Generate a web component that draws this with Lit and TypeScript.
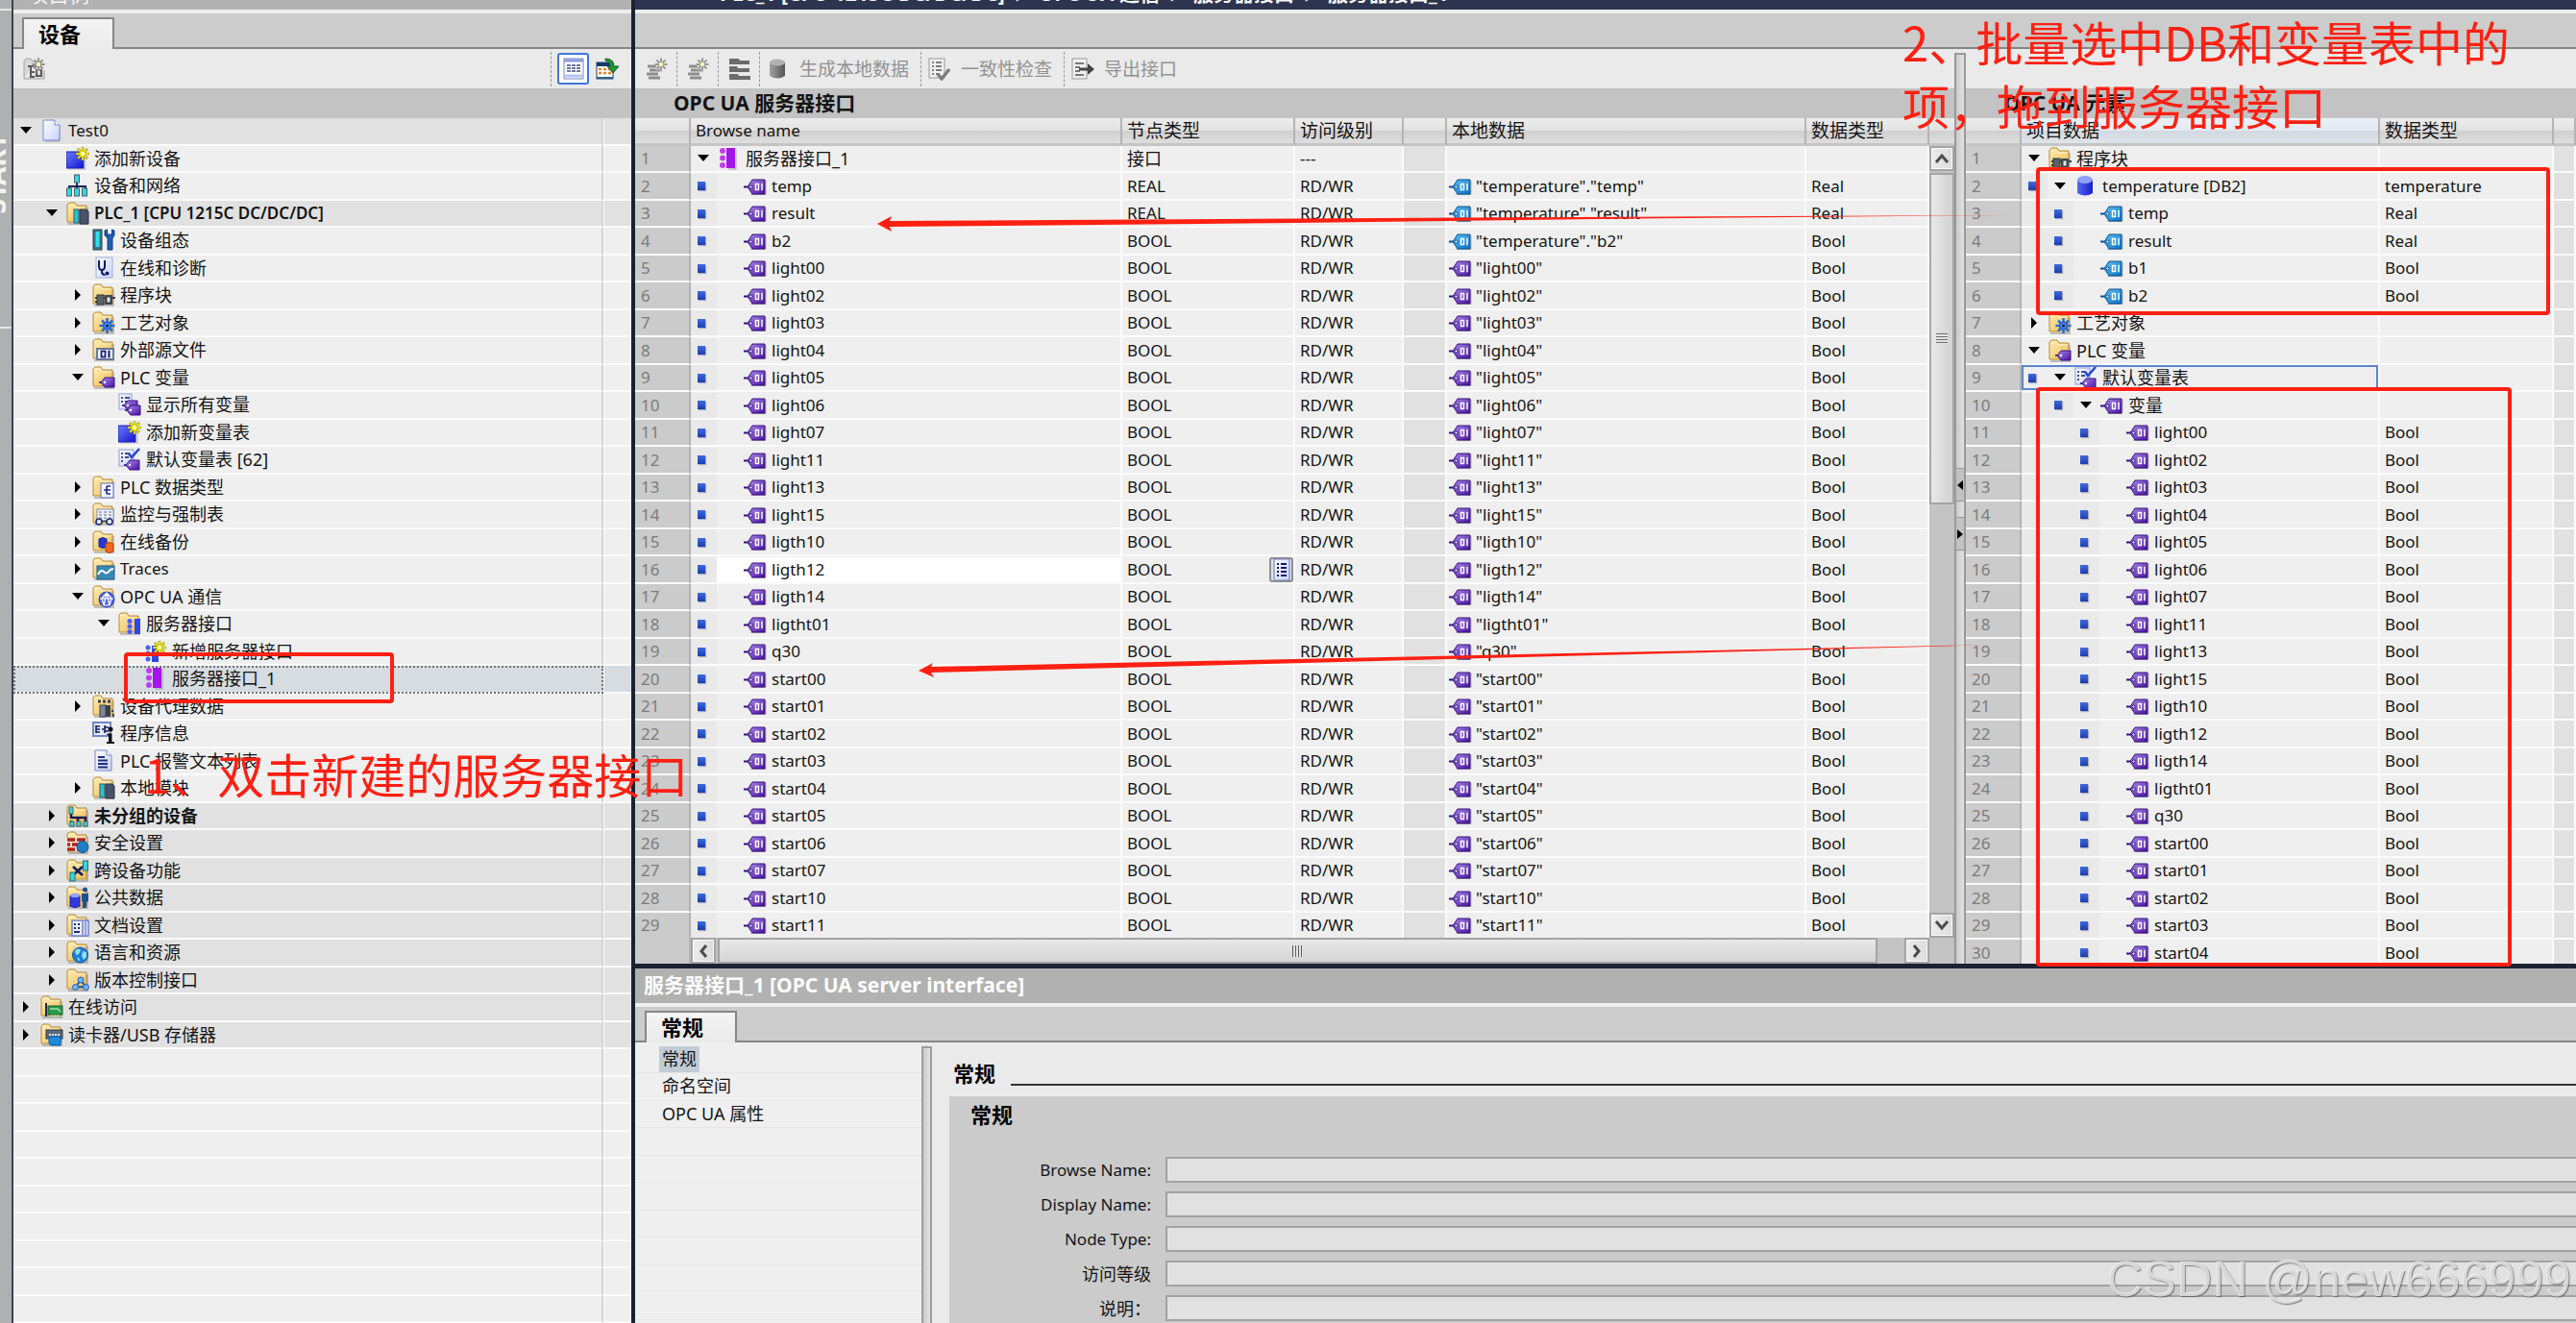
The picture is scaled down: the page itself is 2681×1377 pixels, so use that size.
import { LitElement, html, svg, css, nothing, TemplateResult } from "lit";
import { customElement } from "lit/decorators.js";
import { classMap } from "lit/directives/class-map.js";
import { styleMap } from "lit/directives/style-map.js";

type Row = {
  level: number;
  icon: string;
  text: string;
  open?: boolean;
  closed?: boolean;
  shade?: boolean;
  bold?: boolean;
  selected?: boolean;
};

const PROJECT_TREE: Row[] = [
  { level: 0, icon: "doc", text: "Test0", open: true, shade: true },
  { level: 1, icon: "add", text: "添加新设备" },
  { level: 1, icon: "net", text: "设备和网络" },
  { level: 1, icon: "fplc", text: "PLC_1 [CPU 1215C DC/DC/DC]", open: true, shade: true, bold: true },
  { level: 2, icon: "config", text: "设备组态" },
  { level: 2, icon: "diag", text: "在线和诊断" },
  { level: 2, icon: "fblock", text: "程序块", closed: true },
  { level: 2, icon: "ftech", text: "工艺对象", closed: true },
  { level: 2, icon: "fsource", text: "外部源文件", closed: true },
  { level: 2, icon: "ftag", text: "PLC 变量", open: true },
  { level: 3, icon: "alltags", text: "显示所有变量" },
  { level: 3, icon: "add", text: "添加新变量表" },
  { level: 3, icon: "deftags", text: "默认变量表 [62]" },
  { level: 2, icon: "ftype", text: "PLC 数据类型", closed: true },
  { level: 2, icon: "fwatch", text: "监控与强制表", closed: true },
  { level: 2, icon: "fbackup", text: "在线备份", closed: true },
  { level: 2, icon: "ftrace", text: "Traces", closed: true },
  { level: 2, icon: "fopc", text: "OPC UA 通信", open: true },
  { level: 3, icon: "fserver", text: "服务器接口", open: true },
  { level: 4, icon: "newserver", text: "新增服务器接口" },
  { level: 4, icon: "server", text: "服务器接口_1", selected: true },
  { level: 2, icon: "fproxy", text: "设备代理数据", closed: true },
  { level: 2, icon: "info", text: "程序信息" },
  { level: 2, icon: "textlist", text: "PLC 报警文本列表" },
  { level: 2, icon: "fplc", text: "本地模块", closed: true },
  { level: 1, icon: "fungrouped", text: "未分组的设备", closed: true, shade: true, bold: true },
  { level: 1, icon: "fsecurity", text: "安全设置", closed: true, shade: true },
  { level: 1, icon: "fcross", text: "跨设备功能", closed: true, shade: true },
  { level: 1, icon: "fcommon", text: "公共数据", closed: true, shade: true },
  { level: 1, icon: "fdocs", text: "文档设置", closed: true, shade: true },
  { level: 1, icon: "flang", text: "语言和资源", closed: true, shade: true },
  { level: 1, icon: "fversion", text: "版本控制接口", closed: true, shade: true },
  { level: 0, icon: "fonline", text: "在线访问", closed: true, shade: true },
  { level: 0, icon: "fcard", text: "读卡器/USB 存储器", closed: true, shade: true },
];

const TAGS = [
  "light00", "light02", "light03", "light04", "light05", "light06", "light07",
  "light11", "light13", "light15", "ligth10", "ligth12", "ligth14", "ligtht01",
  "q30", "start00", "start01", "start02", "start03", "start04", "start05",
  "start06", "start07", "start10", "start11",
];

const ELEMENTS: (Row & { type: string; focus?: boolean })[] = [
  { level: 0, icon: "fblock", text: "程序块", open: true, type: "" },
  { level: 1, icon: "db", text: "temperature [DB2]", open: true, type: "temperature" },
  { level: 2, icon: "tagblue", text: "temp", type: "Real" },
  { level: 2, icon: "tagblue", text: "result", type: "Real" },
  { level: 2, icon: "tagblue", text: "b1", type: "Bool" },
  { level: 2, icon: "tagblue", text: "b2", type: "Bool" },
  { level: 0, icon: "ftech", text: "工艺对象", closed: true, type: "" },
  { level: 0, icon: "ftag", text: "PLC 变量", open: true, type: "" },
  { level: 1, icon: "deftags", text: "默认变量表", open: true, type: "", focus: true },
  { level: 2, icon: "tag", text: "变量", open: true, type: "" },
  ...TAGS.slice(0, 20).map((t) => ({ level: 3, icon: "tag", text: t, type: "Bool" })),
];

const NODES = [
  { name: "temp", node: "REAL", local: '"temperature"."temp"', type: "Real" },
  { name: "result", node: "REAL", local: '"temperature"."result"', type: "Real" },
  { name: "b2", node: "BOOL", local: '"temperature"."b2"', type: "Bool" },
  ...TAGS.map((t) => ({ name: t, node: "BOOL", local: `"${t}"`, type: "Bool" })),
];

const folder = svg`
  <path d="M2 23h20V6" fill="none" stroke="#000" stroke-opacity=".2" stroke-width="2"/>
  <path d="M1 21V3l2-2h6l2 3h10v17z" fill="url(#gFolder)" stroke="#b98a34"/>
  <path d="M2 5l2-2h4l2 3h10" fill="none" stroke="#fff3cc"/>`;

const star = (x: number, y: number, c = "#f4f000", edge = "#9a9410") => svg`
  <g transform="translate(${x} ${y})">
    <path d="M0-7V7M-7 0H7M-5-5L5 5M5-5L-5 5" stroke=${edge} stroke-width="2.6"/>
    <path d="M0-6.500V6.500M-6.500 0H6.500M-4.500-4.500L4.500 4.500M4.500-4.500L-4.500 4.500" stroke=${c} stroke-width="1.5"/>
    <circle r="2.200" fill="#fffcb0"/>
  </g>`;

const tagShape = (fill: string, edge: string) => svg`
  <path d="M7 20.500h16V6" fill="none" stroke="#000" stroke-opacity=".25"/>
  <path d="M0 12.500h5" stroke=${edge} stroke-width="2"/>
  <path d="M4 12.500L9 5h13v15H9z" fill=${fill} stroke=${edge} stroke-width="1"/>
  <circle cx="7.500" cy="12.500" r="1.500" fill="#fff" stroke=${edge}/>
  <rect x="12.500" y="9.500" width="3" height="6" fill="none" stroke="#fff" stroke-width="1.500"/>
  <path d="M19 8.700v7.600" stroke="#fff" stroke-width="1.500"/>`;

const miniTag = (x: number, y: number) => svg`
  <g transform="translate(${x} ${y})">
    <path d="M-2 5h3" stroke="#1d0a5c" stroke-width="1.500"/>
    <path d="M0 5L4 0h10v10H4z" fill="url(#gTag)" stroke="#3b0f8c"/>
    <circle cx="4" cy="5" r="1.200" fill="#fff"/>
  </g>`;

const sheet = svg`
  <path d="M3 1h12l5 5v16H3z" fill="url(#gSheet)" stroke="#7a86d8"/>
  <path d="M15 1v5h5" fill="#fff" stroke="#7a86d8"/>`;

const ICONS: Record<string, TemplateResult<2>> = {
  doc: svg`<path d="M5 23h15V8" fill="none" stroke="#000" stroke-opacity=".25"/>${sheet}`,
  add: svg`<path d="M2 23h18V7" fill="none" stroke="#000" stroke-opacity=".2"/><rect x="0" y="5" width="18" height="17" fill="url(#gBlue)" stroke="#1a1fc0"/>${star(17, 7)}`,
  net: svg`
    <path d="M11 8v5M3 17v-4h17v4M11 13v4" fill="none" stroke="#1d2358" stroke-width="2"/>
    <g fill="#35d6e2" stroke="#47636b"><rect x="8.500" y="1" width="5" height="8"/><rect x=".5" y="15" width="5" height="8"/><rect x="8.500" y="15" width="5" height="8"/><rect x="16.500" y="15" width="5" height="8"/></g>`,
  fplc: svg`${folder}<rect x="8" y="8" width="5" height="14" fill="#25c3d4" stroke="#35555f"/><path d="M14 8h7l2 2v13h-9z" fill="#4a5468" stroke="#2b3243"/>`,
  config: svg`<rect x="1" y="1" width="9" height="21" fill="#3f7180" stroke="#274751"/><rect x="3.500" y="3" width="4" height="16" fill="#29e2ee"/>
    <path d="M13 2v5l3 3v12h5V10l2-3V2l-2.500-1v5h-5V1z" fill="#2160b4" stroke="#123f80"/>`,
  diag: svg`<rect x="4" y="1" width="17" height="21" fill="url(#gSheet)" stroke="#a2aede"/><path d="M8 5H7v5q0 4 3 4t3-4V5h-1M10 14v2q0 3 3.500 3" fill="none" stroke="#10176e" stroke-width="2"/><circle cx="15.500" cy="17.500" r="2" fill="#10176e"/>`,
  fblock: svg`${folder}<path d="M3 15h21M3 19h5" stroke="#3a3f4a" stroke-width="2"/><rect x="5" y="12" width="7" height="10" fill="#5a6270" stroke="#2e333d"/><rect x="13" y="12" width="8" height="10" fill="#3f4652"/><rect x="15.500" y="14.500" width="3" height="5" fill="#dfe6ee"/>`,
  ftech: svg`${folder}<g transform="translate(15.500 15)"><path d="M0-8V8M-8 0H8M-5.500-5.500L5.500 5.500M5.500-5.500L-5.500 5.500" stroke="#2c6fd8" stroke-width="2.600"/><circle r="4" fill="#3f86e8" stroke="#1d4fae"/><circle r="1.500" fill="#0e2050"/></g>`,
  fsource: svg`${folder}<rect x="5" y="11" width="17" height="11" fill="#eef2fb" stroke="#6a7894" stroke-width="2"/><rect x="9.500" y="13.500" width="4" height="6" fill="none" stroke="#10176e" stroke-width="1.700"/><path d="M17.500 12.700v7.600" stroke="#10176e" stroke-width="2"/>`,
  ftag: svg`${folder}${miniTag(9, 12)}`,
  alltags: svg`<rect x="1" y="1" width="13" height="16" fill="url(#gSheet)" stroke="#8e9ae0"/><path d="M3 5h2M7 5h5M3 9h2M7 9h3" stroke="#10176e" stroke-width="1.600"/>${miniTag(6, 8)}${miniTag(9, 13)}`,
  deftags: svg`<rect x="1" y="2" width="15" height="17" fill="url(#gSheet)" stroke="#8e9ae0"/><path d="M3 6h2M7 6h5M3 10h2M7 10h4M3 14h2" stroke="#10176e" stroke-width="1.600"/><path d="M11 6l3 4 8-9" fill="none" stroke="#2548d0" stroke-width="2.600"/>${miniTag(8, 13)}`,
  ftype: svg`${folder}<rect x="9" y="8" width="13" height="15" fill="#f2f5ff" stroke="#6070c0"/><path d="M12 15h3M15 11v8M15 11h4M15 15h4M15 19h4" stroke="#1c2a90" stroke-width="1.600" fill="none"/>`,
  fwatch: svg`${folder}<rect x="5" y="7" width="17" height="12" fill="#f2f5ff" stroke="#7f8cb0"/><path d="M7 10h13M7 13h13M7 16h13" stroke="#56639a" stroke-dasharray="3 2"/><path d="M10 20q3-2 5 0" fill="none" stroke="#123"/><circle cx="7" cy="20" r="3" fill="#dfe8ff" stroke="#243070" stroke-width="1.600"/><circle cx="18" cy="20" r="3" fill="#dfe8ff" stroke="#243070" stroke-width="1.600"/>`,
  fbackup: svg`${folder}<path d="M7 9v8q4 3 8 0V9q-4-3-8 0z" fill="#2338d8" stroke="#1a2494"/><path d="M14 14v8q4 3 8 0v-8q-4-3-8 0z" fill="#f26a20" stroke="#b8430c"/>`,
  ftrace: svg`${folder}<rect x="5" y="9" width="18" height="14" fill="#3689b8" stroke="#1f5d84"/><path d="M6 18q3-6 6-3t5 0 5-3" fill="none" stroke="#fff" stroke-width="2"/>`,
  fopc: svg`${folder}<circle cx="15" cy="15" r="8" fill="#5468e0" stroke="#2d3fa8"/><path d="M15 8l-5 6 2 7h6l2-7zM8 14h14M12 21l3-13 3 13" fill="none" stroke="#fff" stroke-width="1.200"/>`,
  fserver: svg`${folder}<rect x="17" y="7" width="6" height="16" fill="#3048e0"/><circle cx="12" cy="9.500" r="2.500" fill="#4a60f0"/><circle cx="12" cy="15" r="2.500" fill="#4a60f0"/><circle cx="12" cy="20.500" r="2.500" fill="#4a60f0"/>`,
  newserver: svg`<rect x="8" y="6" width="7" height="17" fill="#3048e0"/><circle cx="4" cy="8" r="2.500" fill="#4a60f0"/><circle cx="4" cy="14" r="2.500" fill="#4a60f0"/><circle cx="4" cy="20" r="2.500" fill="#4a60f0"/>${star(16, 8)}`,
  server: svg`<path d="M19 2v21h-8" fill="none" stroke="#000" stroke-opacity=".3"/><rect x="9" y="1" width="9" height="21" fill="#a514ea"/><circle cx="5" cy="4" r="3" fill="#c23cf4"/><circle cx="5" cy="11.500" r="3" fill="#c23cf4"/><circle cx="5" cy="19" r="3" fill="#c23cf4"/>`,
  fproxy: svg`${folder}<path d="M6 7h14" stroke="#39404e" stroke-width="3" stroke-dasharray="3 2"/><rect x="8" y="11" width="6" height="12" fill="#7c8697" stroke="#39404e"/><rect x="14" y="11" width="5" height="12" fill="#39404e"/><rect x="20" y="16" width="2" height="2" fill="#39404e"/><rect x="21" y="20" width="2" height="3" fill="#39404e"/>`,
  info: svg`<rect x="1" y="1" width="18" height="14" fill="#e6ecff" stroke="#7487c8" stroke-width="2"/><path d="M4 4v8M4 5h4M4 8h4M4 11h4M10 8h3M13 4v8M13 6h4M13 10h4" stroke="#10206a" stroke-width="1.600"/><circle cx="19" cy="8" r="2.500" fill="#101010"/><path d="M15.500 12.500h5V21H23v2h-8v-2h2v-6.500h-1.500z" fill="#101010"/>`,
  textlist: svg`${sheet}<path d="M6 8h7M6 11.500h10M6 15h10M6 18.500h10" stroke="#1c2a80" stroke-width="1.800"/>`,
  fungrouped: svg`${folder}<path d="M5 9v6M5 14h15v5M5 17v2M12 14v5" fill="none" stroke="#141a58" stroke-width="2.600"/><g fill="#35d6e2" stroke="#47636b"><rect x="3" y="3" width="4" height="7"/><rect x="4" y="18" width="4" height="5"/><rect x="11" y="18" width="4" height="5"/><rect x="18" y="18" width="4" height="5"/></g>`,
  fsecurity: svg`${folder}<rect x="0" y="7" width="21" height="14" fill="#f4e4dc"/><path d="M1 9h8M11 9h9M1 14h3M6 14h8M16 14h5M1 19h8M11 19h5" stroke="#b02418" stroke-width="3.600"/><circle cx="17" cy="16.500" r="6" fill="#1d7fc4" stroke="#105688"/>`,
  fcross: svg`${folder}<path d="M7 8l10 9M17 8L7 17" stroke="#101c60" stroke-width="2.600"/><g fill="#35d6e2" stroke="#2e6d78"><rect x="17.500" y="2" width="5" height="10"/><rect x="4" y="14" width="5" height="9"/></g>`,
  fcommon: svg`${folder}<path d="M4 10v11q5 3 10 0V10q-5-3-10 0z" fill="#2c3ae0" stroke="#1a2494"/><ellipse cx="9" cy="10" rx="5" ry="2" fill="#94a4f8"/><path d="M16 8h7v8l-2 1v6h-4v-6l-1-1z" fill="#1c5290"/><circle cx="19.500" cy="4" r="2.500" fill="#1c5290"/>`,
  fdocs: svg`${folder}<rect x="6" y="7" width="17" height="16" fill="#e9edff" stroke="#7482cc" stroke-width="1.500"/><path d="M8 11h2M8 15h2M8 19h6M12 11h2M12 15h2" stroke="#1c2a80" stroke-width="1.800"/><path d="M17 8v14M20 8v14" stroke="#7482cc" stroke-width="1.500"/>`,
  flang: svg`${folder}<circle cx="14.500" cy="15" r="8" fill="#1f7fd8" stroke="#1257a0"/><path d="M9 10q4-3 6 0l-2 4-3 1zM17 11l4 1v5l-3 3-2-4zM11 17l3 2-1 3z" fill="#8fe0f0"/>`,
  fversion: svg`${folder}<path d="M15 12l-5 7h10z" fill="none" stroke="#1f5fb8" stroke-width="2"/><g fill="#6db8f8" stroke="#1f5fb8"><circle cx="15" cy="12" r="3"/><circle cx="9.500" cy="19.500" r="3"/><circle cx="20.500" cy="19.500" r="3"/></g>`,
  fonline: svg`${folder}<path d="M6 8v14" stroke="#20265c" stroke-width="2"/><rect x="8" y="11" width="15" height="9" fill="#2b9a50" stroke="#14602c"/><path d="M10 14h8l3 3M12 20v3M15 20v3M18 20v3" stroke="#9fe0a8" stroke-width="1.500" fill="none"/>`,
  fcard: svg`${folder}<rect x="6" y="7" width="17" height="9" fill="#5c6878" stroke="#2e3744"/><path d="M9 12h11" stroke="#dfe6ee" stroke-width="2" stroke-dasharray="2 1"/><path d="M9 14h12v9H11l-2-2z" fill="#1d8be0" stroke="#0d5ea4"/>`,
  tag: tagShape("url(#gTag)", "#35107c"),
  tagblue: tagShape("url(#gCyan)", "#0b4d8c"),
  db: svg`<path d="M3 5v14q8 5 16 0V5z" fill="url(#gDb)"/><ellipse cx="11" cy="5" rx="8" ry="4" fill="#8fa0fa"/>`,
  gnew: svg`<path d="M1 22V4l2-3h5l2 3h3M1 22h21V13" fill="#d8d8d8" stroke="#a2a2a2"/><path d="M5 9h8M8 10v10h4M8 15h4M14 13h5v6h-5z" fill="none" stroke="#5a5a5a" stroke-width="2"/>${star(16, 7, "#777777", "#d8d8d8")}`,
  gstack: svg`<path d="M2 9h9M4 13h13M1 17h12M3 21h12" stroke="#8d8d8d" stroke-width="3"/>${star(16, 7, "#808080", "#e4e4e4")}`,
  gtree: svg`<path d="M1 1h10l1 2h10v4H1zM1 9h8l1 2h12v4H1zM1 17h9l1 2h12v4H1z" fill="#6c6c6c"/>`,
  gdb: svg`<path d="M3 5v14q8 5 16 0V5z" fill="url(#gGrey)"/><ellipse cx="11" cy="5" rx="8" ry="3.500" fill="#b2b2b2"/>`,
  gcheck: svg`<rect x="1" y="1" width="16" height="20" fill="#f0f0f0" stroke="#9a9a9a"/><path d="M4 5h2M8 5h6M4 9h2M8 9h6M4 13h2M8 13h6M4 17h2M8 17h4" stroke="#555" stroke-width="1.600"/><path d="M10 17l4 5 8-10" fill="none" stroke="#7c7c7c" stroke-width="3.400"/>`,
  gexport: svg`<rect x="1" y="1" width="15" height="21" fill="#f0f0f0" stroke="#9a9a9a"/><path d="M4 6h9M4 10h5M4 14h5M4 18h9" stroke="#777" stroke-width="1.800"/><path d="M8 10.500h9V6l7 6-7 6v-4.500H8z" fill="#444"/>`,
  list: svg`<rect x="2" y="1" width="20" height="21" fill="#fff" stroke="#7a86b8"/><path d="M2 3h20" stroke="#8a9ae0" stroke-width="3"/><path d="M5 8h14M5 11h14M5 14h14" stroke="#3c4880" stroke-width="1.600" stroke-dasharray="4 1"/><path d="M2 19h20" stroke="#b4c0f0" stroke-width="3"/>`,
  sync: svg`<rect x="1" y="5" width="17" height="17" fill="#fff" stroke="#28406c"/><path d="M1 7h17" stroke="#123a70" stroke-width="4"/><path d="M3 12h13M3 16h13" stroke="#e08428" stroke-width="2.600" stroke-dasharray="3 2"/><path d="M1 21h17" stroke="#28608c" stroke-width="2"/><path d="M10 1q9 0 9 8h5l-6 7-6-7h3q0-5-5-6z" fill="#23923c" stroke="#13642a"/>`,
  lines: svg`<rect x="4" y="1" width="16" height="22" fill="url(#gSheet)" stroke="#5b74d8"/><path d="M7 6h2M11 6h6M7 10h2M11 10h6M7 14h2M11 14h6M7 18h2M11 18h6" stroke="#10176e" stroke-width="1.800"/>`,
};

const icon = (name: string) =>
  html`<svg class="icon" viewBox="0 0 24 24" width="24" height="24" aria-hidden="true">${ICONS[name]}</svg>`;

const chevron = (d: string) =>
  html`<svg viewBox="0 0 16 16" width="16" height="16" aria-hidden="true"><path d=${d} fill="none" stroke="#4c4c4c" stroke-width="3"/></svg>`;

const isLatin = (s: string) => !/[\u3000-\u9fff]/.test(s);

@customElement("app-root")
export class AppRoot extends LitElement {
  static styles = css`
    :host {
      display: block;
      position: relative;
      height: 100vh;
      overflow: hidden;
      font-family: "Noto Sans", "Noto Sans CJK SC", sans-serif;
      font-size: 18px;
      line-height: 26px;
      color: #141414;
      background: #eaeaea;
    }
    * { box-sizing: border-box; }
    button, input { font: inherit; color: inherit; margin: 0; padding: 0; border: 0; background: none; }
    .defs { position: absolute; width: 0; height: 0; }
    .icon { display: block; flex: none; }
    .latin { font-size: 17px; }
    .frame { display: flex; height: 100%; }

    .rail { flex: 0 0 14px; background: #b0b0b0; border-right: 2px solid #3c4252; display: flex; flex-direction: column; overflow: hidden; }
    .rail-top { height: 11px; border-bottom: 2px solid #e8e8e8; }
    .rail-tab { height: 331px; border-bottom: 2px solid #e8e8e8; display: flex; align-items: center; justify-content: flex-end; padding-right: 6px; padding-top: 10px; }
    .rail-text { writing-mode: vertical-rl; transform: rotate(180deg); font-size: 28px; font-weight: 700; line-height: 22px; color: #f4f4f4; }

    .titlebar { height: 10px; flex: none; overflow: hidden; display: flex; align-items: flex-end; justify-content: space-between; background: #b1b1b1; color: #f6f6f6; font-size: 22px; font-weight: 700; line-height: 30px; white-space: pre; }
    .titlebar > span { display: block; padding-bottom: 2px; }
    .titlebar.grey { padding: 0 8px 0 14px; font-weight: 400; }
    .titlebar.navy { background: #2d344f; padding-left: 88px; font-size: 21px; justify-content: flex-start; gap: 12px; }
    .strip { height: 41px; flex: none; background: #cccccc; border-top: 4px solid #efefef; border-bottom: 2px solid #868686; display: flex; align-items: flex-end; padding-left: 9px; }
    .tab { height: 33px; margin-bottom: -2px; min-width: 96px; padding: 0 15px 2px; text-align: left; background: linear-gradient(#f4f4f4, #eaeaea); border: 2px solid #868686; border-bottom: 0; font-size: 22px; font-weight: 700; color: #000; }
    .toolbar { height: 41px; flex: none; background: #eaeaea; display: flex; align-items: center; color: #929292; font-size: 19px; }
    .toolbar button { display: flex; align-items: center; height: 33px; gap: 10px; }
    .sep { width: 1px; height: 36px; border-left: 1px dashed #9a9a9a; }
    .band { height: 31px; flex: none; background: #c3c3c3; font-size: 21px; font-weight: 700; line-height: 30px; padding-left: 40px; white-space: nowrap; }

    .project { flex: 0 0 643px; display: flex; flex-direction: column; background: #efefef; min-width: 0; }
    .project .toolbar { padding: 0 13px 0 10px; }
    .spring { flex: 1; }
    .toolbar .on { width: 33px; margin: 0 7px 0 6px; justify-content: center; background: #fff; border: 2px solid #3f76dc; border-radius: 3px; }
    .tree { list-style: none; margin: 0; padding: 0; flex: 1; min-height: 0; overflow: hidden; }
    .node { display: flex; height: 28px; }
    .node:nth-child(odd) { height: 29px; }
    .node-main { flex: 1; border-bottom: 2px solid #fbfbfb; border-right: 2px solid #d4d4d4; }
    .node-side { flex: 0 0 29px; border-bottom: 2px solid #fbfbfb; border-left: 1px solid #fbfbfb; }
    .shade .node-main, .shade .node-side { background: #e1e1e1; }
    .selected .node-main { background: #d7dce0; outline: 2px dotted #747474; outline-offset: -2px; }
    .selected .node-side { background: #d7dce0; }
    .bold { font-weight: 600; }
    .label { display: flex; align-items: center; height: 26px; white-space: pre; }
    .slot { flex: 0 0 27px; height: 100%; display: flex; align-items: center; padding-left: 7px; }
    .slot.tint { background: #e9e9e9; }
    .slot.arrow { flex-basis: 28px; }
    .label .icon { margin-right: 5px; }
    .bullet { width: 8px; height: 9px; background: linear-gradient(#3f6ae0, #1c3cae); box-shadow: 1px 1px 1px #aab; }

    .vbar { flex: 0 0 4px; background: #1b2233; }
    .work { flex: 1; min-width: 0; display: grid; grid-template-rows: minmax(0, 1003fr) 5px minmax(0, 369fr); }
    .hbar { background: #1b2233; }
    .editor { display: flex; flex-direction: column; min-height: 0; }
    .panes { flex: 1; min-height: 0; display: grid; grid-template-columns: minmax(0, 1373fr) 12px minmax(0, 635fr); }
    .pane { display: flex; flex-direction: column; min-width: 0; min-height: 0; background: #efefef; }
    .pane .toolbar { padding-left: 1px; }
    .pane .toolbar button { padding: 0 8px 0 10px; }
    .pane .toolbar .wide { padding: 0 12px 0 7px; }
    .splitter { margin-top: 4px; background: linear-gradient(90deg, #cacaca, #e2e2e2); border: 2px solid #999; border-bottom: 0; display: flex; flex-direction: column; align-items: center; justify-content: center; gap: 16px; }
    .splitter button { width: 8px; height: 35px; background: #c2c2c2; border: 1px solid #999; border-width: 1px 0; display: flex; align-items: center; justify-content: center; }

    table { width: 100%; border-collapse: separate; border-spacing: 0; table-layout: fixed; }
    th { height: 29px; padding: 0 0 0 5px; text-align: left; font-weight: 400; font-size: 19px; line-height: 24px; background: linear-gradient(#ececec, #e2e2e2 50%, #d0d0d0 52%, #dedede); border-right: 2px solid #b4b4b4; border-bottom: 3px solid #c4c4c4; white-space: nowrap; }
    th.latin { font-size: 17px; }
    th.hot { background: linear-gradient(#eaf0f8, #e4eaf2 50%, #d3d9e0 52%, #dee4ea); }
    tbody tr { height: 28px; }
    tbody tr:nth-child(even) { height: 29px; }
    td { padding: 0 0 0 5px; background: #efefef; border-right: 2px solid #fbfbfb; border-bottom: 2px solid #fbfbfb; white-space: nowrap; overflow: hidden; }
    td.num { font-size: 17px; padding-left: 6px; color: #7c7c7c; background: #cbcbcb; border-right-color: #b2b2b2; }
    td.tree-cell { padding: 0; }
    td.void { background: #e1e1e1; }
    td.edit .label { background: #fff; }
    td.focus { box-shadow: inset 0 0 0 2px #5b85d6; }
    td.focus .tint { background: none; }
    .with-icon { display: flex; align-items: center; gap: 4px; margin-left: -3px; }
    .with-button { display: flex; justify-content: space-between; align-items: center; height: 26px; }
    .with-button button { width: 25px; height: 26px; display: flex; justify-content: center; align-items: center; border: 2px solid #8f8f8f; border-radius: 3px; background: #dfe3ea; overflow: hidden; }
    .clip { flex: 1; min-height: 0; overflow: hidden; }

    .grid-wrap { flex: 1; min-height: 0; display: grid; grid-template-columns: minmax(0, 1fr) 26px; grid-template-rows: minmax(0, 1fr) 27px; }
    .vscroll { background: #c3c3c3; display: flex; flex-direction: column; }
    .vscroll-head { height: 29px; background: linear-gradient(#ececec, #e2e2e2 50%, #d0d0d0 52%, #dedede); border-bottom: 3px solid #c4c4c4; }
    .sb { width: 26px; height: 26px; flex: none; display: flex; align-items: center; justify-content: center; border: 2px solid #a4a4a4; background: linear-gradient(90deg, #ececec, #dcdcdc); box-shadow: inset 0 0 0 1px #fafafa; }
    .vthumb { height: 345px; margin: 2px 0 auto; border: 2px solid #a4a4a4; background: linear-gradient(90deg, #e8e8e8, #d2d2d2); display: flex; align-items: center; justify-content: center; }
    .grip { width: 12px; height: 11px; background: repeating-linear-gradient(#6e6e6e 0 1px, #e4e4e4 1px 3px); }
    .hthumb .grip { width: 11px; height: 12px; background: repeating-linear-gradient(90deg, #5e5e5e 0 1px, #e4e4e4 1px 3px); }
    .hscroll { display: flex; background: #c3c3c3; }
    .hscroll .sb { height: 27px; }
    .hpad { flex: 0 0 58px; background: #cbcbcb; border-right: 2px solid #b2b2b2; }
    .hthumb { flex: 1; margin: 0 28px 0 2px; border: 2px solid #a4a4a4; background: linear-gradient(#e8e8e8, #d4d4d4); display: flex; align-items: center; justify-content: center; }
    .corner { background: #c3c3c3; }

    .inspector { display: flex; flex-direction: column; min-height: 0; background: #eaeaea; }
    .caption { height: 36px; flex: none; padding-left: 9px; background: #b1b1b1; color: #fdfdfd; font-size: 21px; font-weight: 700; line-height: 34px; }
    .inspector .strip { padding-left: 10px; }
    .props { flex: 1; min-height: 0; display: flex; }
    .nav { flex: 0 0 298px; list-style: none; margin: 0; padding: 4px 0 0; background: #efefef; overflow: hidden; }
    .nav li { height: 28px; border-bottom: 1px solid #e6e6e6; padding-left: 25px; line-height: 26px; }
    .nav li:nth-child(even) { height: 29px; }
    .nav a { display: inline-block; height: 27px; padding: 0 3px; color: inherit; text-decoration: none; }
    .nav a.current { background: #c2ccd6; }
    .nav-split { flex: 0 0 11px; margin-top: 4px; background: linear-gradient(90deg, #cacaca, #e2e2e2); border: 2px solid #9c9c9c; border-bottom: 0; }
    .form { flex: 1; min-width: 0; padding: 17px 0 0 18px; display: flex; flex-direction: column; }
    h2, h3 { margin: 0; font-size: 22px; font-weight: 700; line-height: 30px; color: #000; }
    h2 { display: flex; gap: 16px; padding-left: 4px; }
    h2::after { content: ""; flex: 1; height: 26px; border-bottom: 2px solid #333; }
    .group { flex: 1; min-height: 0; margin-top: 9px; background: #cbcbcb; padding: 4px 0 0 22px; overflow: hidden; }
    .field { display: grid; grid-template-columns: 188px 1fr; column-gap: 15px; align-items: center; height: 27px; margin-bottom: 9px; }
    h3 { margin-bottom: 29px; }
    .field label { text-align: right; white-space: nowrap; }
    .field input { width: 100%; height: 27px; border: 2px solid #a2a2a2; border-right: 0; background: #e1e1e1; }

    .overlay { position: absolute; left: 0; top: 0; width: 100%; height: 100%; pointer-events: none; }
    .note { position: absolute; margin: 0; color: #ff2012; font-family: "Noto Sans CJK SC", sans-serif; font-weight: 400; font-size: 49px; line-height: 66px; white-space: pre; pointer-events: none; }
    .note-one { left: 150px; top: 772px; }
    .note-two { left: 1980px; top: 10px; }
    .watermark { position: absolute; right: 5px; bottom: 18px; font-family: "Liberation Sans", sans-serif; font-size: 52px; line-height: 56px; color: rgba(244, 244, 244, 0.75); text-shadow: 1px 1px 1px rgba(60, 60, 60, 0.6); pointer-events: none; }
  `;

  private label(r: Row, tint = false) {
    const slots = [];
    for (let i = 0; i < r.level; i++) {
      slots.push(html`<span class=${classMap({ slot: true, tint })}>${tint && i === r.level - 1 ? html`<span class="bullet"></span>` : nothing}</span>`);
    }
    const arrow = r.open
      ? html`<svg width="12" height="12" viewBox="0 0 12 12"><path d="M0 2h12L6 9z" fill="#000"/></svg>`
      : r.closed
        ? html`<svg width="12" height="12" viewBox="0 0 12 12"><path d="M3 0l6 6-6 6z" fill="#000"/></svg>`
        : nothing;
    return html`<div class=${classMap({ label: true, latin: isLatin(r.text), bold: !!r.bold })}>${slots}<span class="slot arrow">${arrow}</span>${icon(r.icon)}<span>${r.text}</span></div>`;
  }

  private projectPane() {
    return html`
      <aside class="project">
        <div class="titlebar grey"><span>项目树</span></div>
        <div class="strip" role="tablist"><button class="tab" role="tab" aria-selected="true">设备</button></div>
        <div class="toolbar">
          <button aria-label="New">${icon("gnew")}</button>
          <span class="spring"></span><span class="sep"></span>
          <button class="on" aria-label="List">${icon("list")}</button>
          <button aria-label="Sync">${icon("sync")}</button>
        </div>
        <div class="band"></div>
        <ul class="tree" role="tree">
          ${PROJECT_TREE.map((r) => html`
            <li role="treeitem" class=${classMap({ node: true, shade: !!r.shade, selected: !!r.selected })}>
              <div class="node-main">${this.label(r)}</div><div class="node-side"></div>
            </li>`)}
          ${Array.from({ length: 11 }, () => html`<li class="node" role="presentation"><div class="node-main"></div><div class="node-side"></div></li>`)}
        </ul>
      </aside>`;
  }

  private cols(widths: number[]) {
    return html`<colgroup>${widths.map((w) => html`<col style=${styleMap(w ? { width: `${w}px` } : {})}>`)}</colgroup>`;
  }

  private interfaceTable() {
    return html`
      <table>
        ${this.cols([58, 449, 180, 113, 45, 0, 128])}
        <thead><tr><th></th><th class="latin">Browse name</th><th>节点类型</th><th>访问级别</th><th></th><th>本地数据</th><th>数据类型</th></tr></thead>
        <tbody>
          <tr>
            <td class="num">1</td>
            <td class="tree-cell">${this.label({ level: 0, icon: "server", text: "服务器接口_1", open: true })}</td>
            <td>接口</td><td class="latin">---</td><td class="void"></td><td></td><td></td>
          </tr>
          ${NODES.map((n, i) => {
            const edit = n.name === "ligth12";
            return html`
              <tr>
                <td class="num">${i + 2}</td>
                <td class=${classMap({ "tree-cell": true, edit })}>${this.label({ level: 1, icon: "tag", text: n.name }, true)}</td>
                <td class="latin">${edit
                  ? html`<div class="with-button"><span>${n.node}</span><button aria-label="Select type">${icon("lines")}</button></div>`
                  : n.node}</td>
                <td class="latin">RD/WR</td>
                <td class="void"></td>
                <td class="latin"><div class="with-icon">${icon(i < 3 ? "tagblue" : "tag")}<span>${n.local}</span></div></td>
                <td class="latin">${n.type}</td>
              </tr>`;
          })}
        </tbody>
      </table>`;
  }

  private elementTable() {
    return html`
      <table>
        ${this.cols([58, 0, 181, 23])}
        <thead><tr><th></th><th class="hot">项目数据</th><th>数据类型</th><th></th></tr></thead>
        <tbody>
          ${ELEMENTS.map((r, i) => html`
            <tr>
              <td class="num">${i + 1}</td>
              <td class=${classMap({ "tree-cell": true, focus: !!r.focus })}>${this.label(r, true)}</td>
              <td class="latin">${r.type}</td>
              <td class="void"></td>
            </tr>`)}
        </tbody>
      </table>`;
  }

  private editor() {
    return html`
      <section class="editor">
        <div class="titlebar navy">
          <span>PLC_1 [CPU 1215C DC/DC/DC]</span><span>▸</span><span>OPC UA 通信</span><span>▸</span><span>服务器接口</span><span>▸</span><span>服务器接口_1</span>
        </div>
        <div class="strip"></div>
        <div class="panes">
          <div class="pane">
            <div class="toolbar">
              <button aria-label="Insert">${icon("gstack")}</button><span class="sep"></span>
              <button aria-label="Add">${icon("gstack")}</button><span class="sep"></span>
              <button aria-label="Expand">${icon("gtree")}</button><span class="sep"></span>
              <button class="wide">${icon("gdb")}生成本地数据</button><span class="sep"></span>
              <button class="wide">${icon("gcheck")}一致性检查</button><span class="sep"></span>
              <button class="wide">${icon("gexport")}导出接口</button>
            </div>
            <div class="band">OPC UA 服务器接口</div>
            <div class="grid-wrap">
              <div class="clip">${this.interfaceTable()}</div>
              <div class="vscroll">
                <div class="vscroll-head"></div>
                <button class="sb" aria-label="Up">${chevron("M2 12l6-7 6 7")}</button>
                <div class="vthumb"><span class="grip"></span></div>
                <button class="sb" aria-label="Down">${chevron("M2 4l6 7 6-7")}</button>
              </div>
              <div class="hscroll">
                <span class="hpad"></span>
                <button class="sb" aria-label="Left">${chevron("M11 2L6 8l5 6")}</button>
                <div class="hthumb"><span class="grip"></span></div>
                <button class="sb" aria-label="Right">${chevron("M5 2l5 6-5 6")}</button>
              </div>
              <div class="corner"></div>
            </div>
          </div>
          <div class="splitter">
            <button aria-label="Collapse right"><svg width="6" height="10"><path d="M6 0v10L0 5z" fill="#000"/></svg></button>
            <button aria-label="Collapse left"><svg width="6" height="10"><path d="M0 0v10l6-5z" fill="#000"/></svg></button>
          </div>
          <div class="pane">
            <div class="toolbar"></div>
            <div class="band">OPC UA 元素</div>
            <div class="clip">${this.elementTable()}</div>
          </div>
        </div>
      </section>`;
  }

  private inspector() {
    const nav = ["常规", "命名空间", "OPC UA 属性"];
    const fields = ["Browse Name:", "Display Name:", "Node Type:", "访问等级", "说明："];
    return html`
      <section class="inspector">
        <div class="caption">服务器接口_1 [OPC UA server interface]</div>
        <div class="strip" role="tablist"><button class="tab" role="tab" aria-selected="true">常规</button></div>
        <div class="props">
          <ul class="nav">
            ${nav.map((n, i) => html`<li><a href="#" class=${classMap({ current: i === 0 })}>${n}</a></li>`)}
            ${Array.from({ length: 8 }, () => html`<li></li>`)}
          </ul>
          <div class="nav-split"></div>
          <div class="form">
            <h2>常规</h2>
            <div class="group">
              <h3>常规</h3>
              ${fields.map((f, i) => html`
                <div class="field">
                  <label for="f${i}" class=${classMap({ latin: isLatin(f) })}>${f}</label>
                  <input id="f${i}" type="text" readonly>
                </div>`)}
            </div>
          </div>
        </div>
      </section>`;
  }

  private gradients() {
    const g = (id: string, a: string, b: string, x2 = "1", y2 = "1") =>
      svg`<linearGradient id=${id} x1="0" y1="0" x2=${x2} y2=${y2}><stop offset="0" stop-color=${a}/><stop offset="1" stop-color=${b}/></linearGradient>`;
    return html`<svg class="defs" aria-hidden="true"><defs>
      ${g("gFolder", "#ffeeb4", "#edbb55")}
      ${g("gBlue", "#6a7cf8", "#1414d0")}
      ${g("gTag", "#a88ae8", "#4a10a0")}
      ${g("gCyan", "#5cc0f4", "#0a72c8")}
      ${g("gSheet", "#ffffff", "#c6d2fa")}
      ${g("gDb", "#5468f4", "#1a1fc8", "1", "0")}
      ${g("gGrey", "#a2a2a2", "#555555", "1", "0")}
    </defs></svg>`;
  }

  render() {
    return html`
      ${this.gradients()}
      <div class="frame">
        <div class="rail">
          <div class="rail-top"></div>
          <div class="rail-tab"><span class="rail-text">START</span></div>
        </div>
        ${this.projectPane()}
        <div class="vbar"></div>
        <main class="work">
          ${this.editor()}
          <div class="hbar"></div>
          ${this.inspector()}
        </main>
      </div>
      <svg class="overlay" aria-hidden="true">
        <g fill="none" stroke="#ff2012" stroke-width="4">
          <rect x="131" y="681" width="277" height="49" rx="2"/>
          <rect x="2121" y="176" width="531" height="150" rx="2"/>
          <rect x="2121" y="405" width="491" height="599" rx="2"/>
        </g>
        <path fill="#ff2012" d="M913 233L928 225L926 230L1347 227.500L1700 225.700L2097 224L1700 227.500L1347 232L926 236L928 241z"/>
        <path fill="#ff2012" d="M956 698L971 690L969 694L1300 687L1700 678.500L2077 671L1700 681L1300 691.500L969 700L972 705z"/>
      </svg>
      <p class="note note-one">1、双击新建的服务器接口</p>
      <p class="note note-two">2、批量选中DB和变量表中的
项，拖到服务器接口</p>
      <div class="watermark">CSDN @new666999</div>
    `;
  }
}
